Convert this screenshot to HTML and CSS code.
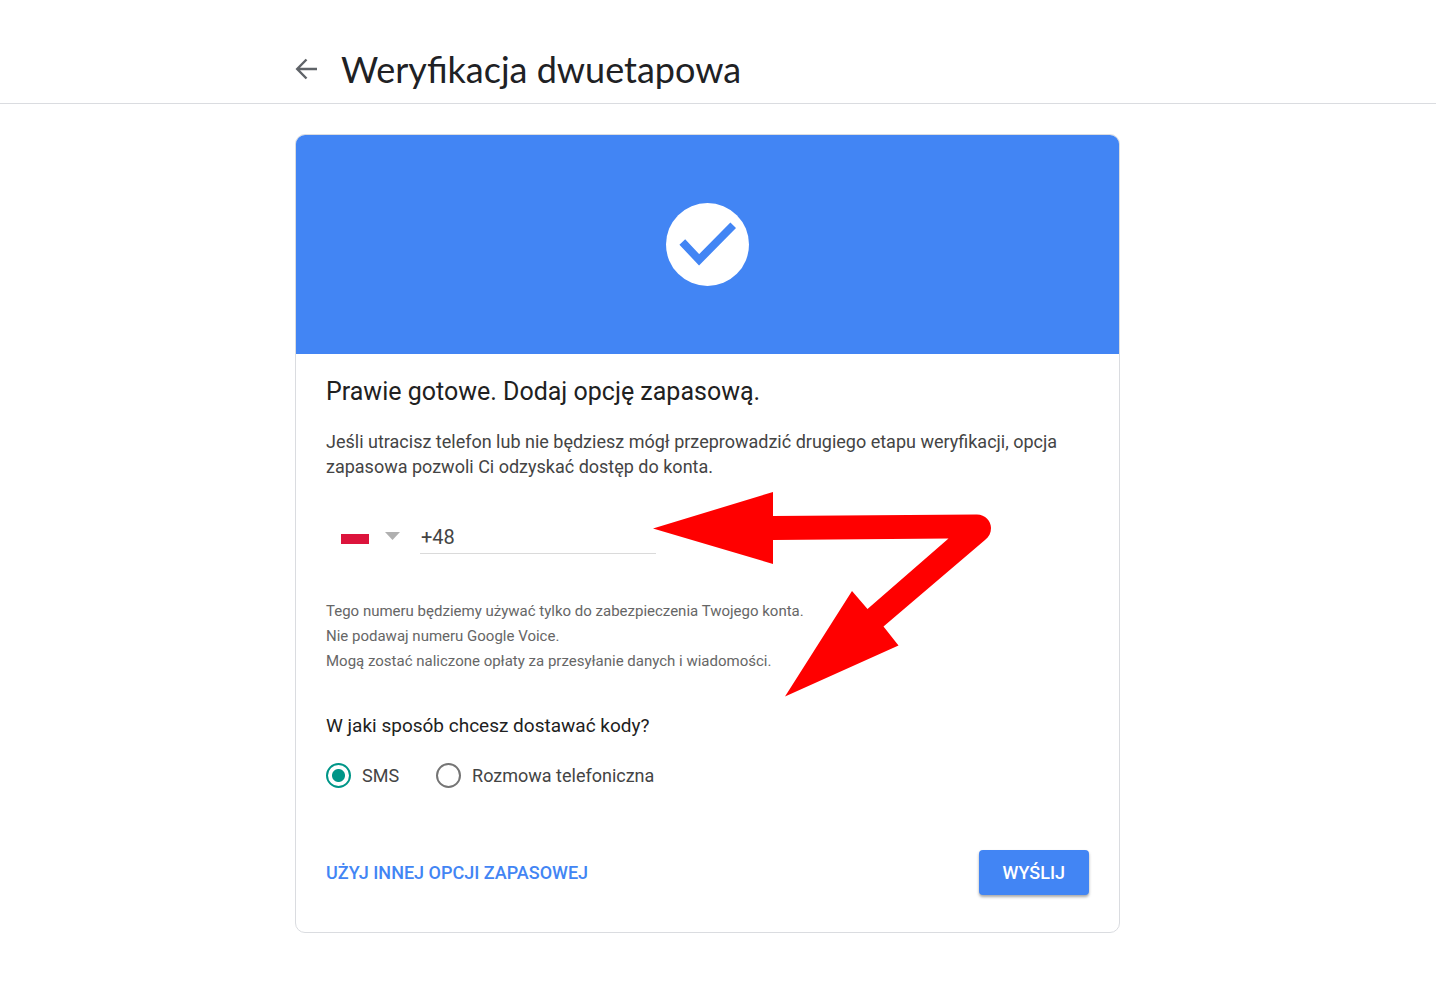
FILE: index.html
```html
<!DOCTYPE html>
<html lang="pl">
<head>
  <meta charset="UTF-8">
  <meta name="viewport" content="width=device-width, initial-scale=1.0">
  <title>Weryfikacja dwuetapowa</title>
  <link rel="stylesheet" href="styles.css">
</head>
<body>
  <header class="header">
    <div class="header-inner">
      <a class="back" href="#" aria-label="Wstecz">
        <svg width="22" height="22" viewBox="0 0 22 22" fill="none" stroke="#5f6368" stroke-width="2.4">
          <path d="M22 11H3M11.500 1.500L2.200 11l9.300 9.500"/>
        </svg>
      </a>
      <h1>Weryfikacja dwuetapowa</h1>
    </div>
  </header>

  <main>
    <form class="card">
      <div class="banner">
        <svg width="83" height="83" viewBox="0 0 84 84">
          <circle cx="42" cy="42" r="42" fill="#fff"/>
          <path d="M16.500 39.500L33.500 57.500L68 22.500" fill="none" stroke="#4285f4" stroke-width="8"/>
        </svg>
      </div>

      <div class="content">
        <h2>Prawie gotowe. Dodaj opcję zapasową.</h2>
        <p class="intro">Jeśli utracisz telefon lub nie będziesz mógł przeprowadzić drugiego etapu weryfikacji, opcja zapasowa pozwoli Ci odzyskać dostęp do konta.</p>

        <div class="phone">
          <select class="country" aria-label="Kraj">
            <option value="PL" aria-label="Polska"></option>
          </select>
          <input class="number" type="tel" value="+48" aria-label="Numer telefonu">
        </div>

        <p class="note">
          Tego numeru będziemy używać tylko do zabezpieczenia Twojego konta.<br>
          Nie podawaj numeru Google Voice.<br>
          Mogą zostać naliczone opłaty za przesyłanie danych i wiadomości.
        </p>

        <fieldset class="method">
          <legend>W jaki sposób chcesz dostawać kody?</legend>
          <div class="options">
            <label><input type="radio" name="method" value="sms" checked>SMS</label>
            <label><input type="radio" name="method" value="call">Rozmowa telefoniczna</label>
          </div>
        </fieldset>

        <div class="actions">
          <a class="other" href="#">UŻYJ INNEJ OPCJI ZAPASOWEJ</a>
          <button class="send" type="submit">WYŚLIJ</button>
        </div>

        <svg class="arrows" width="338" height="206" viewBox="0 0 338 206" aria-hidden="true">
          <path fill="#f00" d="M0 37.500L120 1v24l203-1.500C332 23 338 30 338 37c0 5-2 9-6 12l-101.500 86.500 15 19L132 205.500 199 100l15.500 18 81-70.500L120 49v24z"/>
        </svg>
      </div>
    </form>
  </main>
</body>
</html>
```
FILE: styles.css
```css
* {
  box-sizing: border-box;
}
body {
  font-family: Roboto, "Liberation Sans", sans-serif;
  background: #fff;
  margin: 0;
  color: #212121;
}
h1, h2, p {
  margin: 0;
  font-weight: 400;
}
.header {
  border-bottom: 1px solid #dadce0;
  margin-bottom: 30px;
}
.header, main {
  padding-right: 21px;
}
.header-inner, .card {
  max-width: 825px;
  margin-left: auto;
  margin-right: auto;
}
.header-inner {
  display: flex;
  align-items: center;
  gap: 24px;
  padding: 45px 0 10px;
}
.back {
  display: flex;
}
h1 {
  font-family: Lato, sans-serif;
  font-size: 36px;
  line-height: 48px;
  color: #202124;
}
.card {
  border: 1px solid #dadce0;
  border-radius: 10px;
  overflow: hidden;
}
.banner {
  display: flex;
  justify-content: center;
  padding: 68px 0;
  background: #4285f4;
}
.content {
  position: relative;
  padding: 22px 30px 37px;
}
h2 {
  font-size: 25px;
  line-height: 32px;
}
.intro {
  margin-top: 21px;
  font-size: 18px;
  line-height: 25px;
  color: #444;
}
.phone {
  display: flex;
  gap: 18px;
  margin-top: 39px;
}
.country {
  appearance: none;
  width: 76px;
  height: 36px;
  border: none;
  background:
    url("data:image/svg+xml,%3Csvg xmlns='http://www.w3.org/2000/svg' width='28' height='10'%3E%3Cpath fill='%23dc143c' d='M0 0h28v10H0z'/%3E%3C/svg%3E") 15px 16px no-repeat,
    url("data:image/svg+xml,%3Csvg xmlns='http://www.w3.org/2000/svg' width='15' height='8'%3E%3Cpath fill='%23b0b0b0' d='M0 0h15L7.500 8z'/%3E%3C/svg%3E") 59px 14px no-repeat;
}
.number {
  width: 236px;
  height: 36px;
  padding: 2px 1px 0;
  border: none;
  border-bottom: 1px solid #dadada;
  background: none;
  font-family: inherit;
  font-size: 20px;
  color: #444;
}
.note {
  margin-top: 45px;
  font-size: 15px;
  line-height: 25px;
  color: #666;
}
.method {
  margin: 39px 0 0;
  padding: 0;
  border: none;
}
legend {
  padding: 0;
  font-size: 19px;
  line-height: 25px;
}
.options {
  display: flex;
  flex-wrap: wrap;
  gap: 37px;
  margin-top: 25px;
}
.options label {
  display: flex;
  align-items: center;
  gap: 11px;
  font-size: 18px;
  line-height: 25px;
  color: #444;
}
.options input {
  appearance: none;
  width: 25px;
  height: 25px;
  margin: 0;
  border: 2px solid #757575;
  border-radius: 50%;
}
.options input:checked {
  border-color: #009688;
  background: radial-gradient(circle, #009688 6px, transparent 7px);
}
.actions {
  display: flex;
  align-items: center;
  justify-content: space-between;
  margin-top: 62px;
}
.other {
  font-size: 18px;
  font-weight: 500;
  color: #4285f4;
  text-decoration: none;
}
.send {
  height: 45px;
  padding: 0 24px;
  border: none;
  border-radius: 4px;
  background: #4285f4;
  box-shadow: 0 2px 3px rgba(0, 0, 0, 0.35);
  font-family: inherit;
  font-size: 18px;
  font-weight: 500;
  color: #fff;
  cursor: pointer;
}
.arrows {
  position: absolute;
  left: 357px;
  top: 137px;
  pointer-events: none;
}
```
